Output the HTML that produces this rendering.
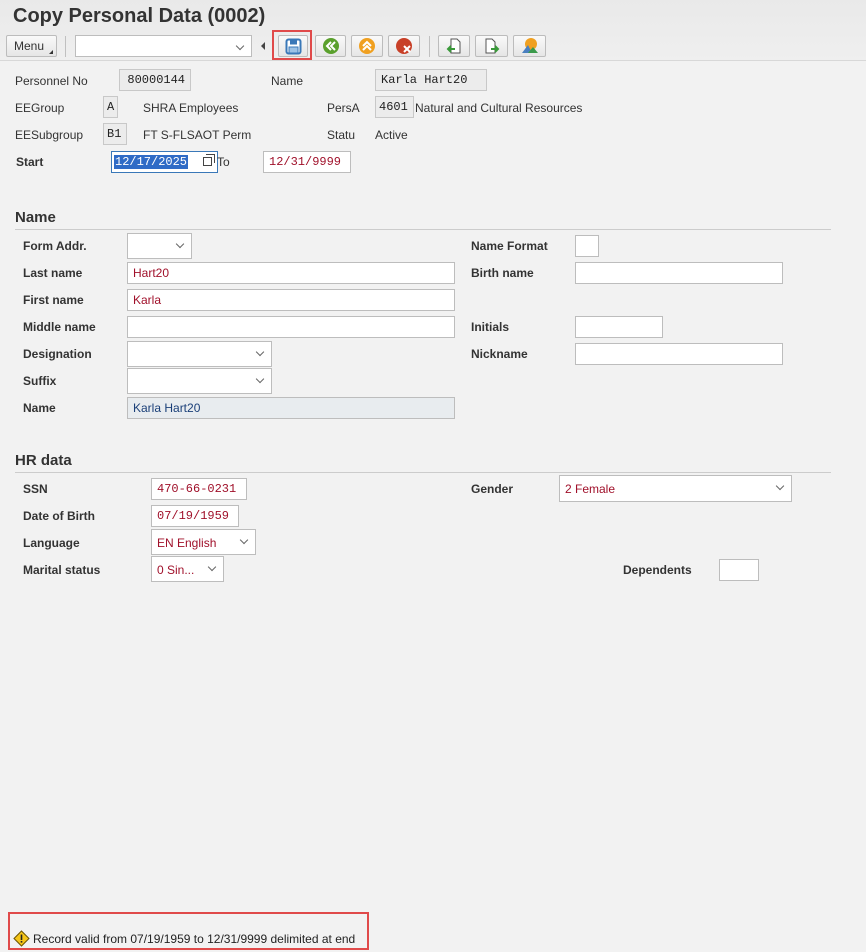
<!DOCTYPE html>
<html><head><meta charset="utf-8"><style>
*{box-sizing:border-box;margin:0;padding:0}
body{width:866px;height:952px;background:#f2f2f2;font-family:"Liberation Sans",Arial,sans-serif;font-size:12px;color:#333;position:relative;overflow:hidden}
.a{position:absolute}
.hdr{left:0;top:0;width:866px;height:61px;background:linear-gradient(#e9e9e9,#efefef);border-bottom:1px solid #d8d8d8}
.t{left:13px;top:5px;font-size:20px;font-weight:bold;color:#333}
.btn{top:35px;height:22px;border:1px solid #bcbcbc;background:linear-gradient(#fafafa,#e6e6e6);border-radius:2px}
.l{font-size:12px;color:#333}
.b{font-weight:bold}
.f{background:#fff;border:1px solid #bdbdbd;height:22px;padding:3px 5px;color:#a0102a;font-size:12px}
.ro{background:#ececec;border:1px solid #c8c8c8;height:22px;padding:3px 5px;font-family:"Liberation Mono",monospace;font-size:12px;color:#222}
.m{font-family:"Liberation Mono",monospace}
.dd::after{content:"";position:absolute;right:8px;top:7px;width:5px;height:5px;border-right:1.5px solid #666;border-bottom:1.5px solid #666;transform:rotate(45deg)}
.sec{font-size:15px;font-weight:bold;color:#333}
.line{height:1px;background:#ccc}
.ic{position:absolute;left:50%;top:50%;margin:-9px 0 0 -9px}
</style></head><body>
<div class="a hdr"></div>
<div class="a t">Copy Personal Data (0002)</div>
<div class="a btn" style="left:6px;width:51px;font-size:12px;padding:3px 0 0 7px">Menu<span style="position:absolute;right:3px;bottom:2px;width:0;height:0;border-left:4px solid transparent;border-bottom:4px solid #333"></span></div>
<div class="a" style="left:65px;top:36px;width:1px;height:21px;background:#c0c0c0"></div>
<div class="a f dd" style="left:75px;top:35px;width:177px;height:22px"></div>
<div class="a" style="left:261px;top:42px;width:0;height:0;border-top:4px solid transparent;border-bottom:4px solid transparent;border-right:4px solid #444"></div>
<div class="a btn" style="left:278px;width:30px"><svg class="a" style="left:6px;top:2px" width="17" height="17" viewBox="0 0 17 17"><rect x="1.5" y="1.5" width="14" height="14" rx="2" fill="#fff" stroke="#3a78b8" stroke-width="2"/><rect x="5" y="1.5" width="7" height="5" fill="#3a78b8"/><rect x="4" y="9" width="9" height="6" fill="#9cc2e6" stroke="#3a78b8"/></svg></div>
<div class="a" style="left:272px;top:30px;width:40px;height:30px;border:2px solid #e04a4a"></div>
<div class="a btn" style="left:315px;width:31px"><svg class="ic" width="18" height="18" viewBox="0 0 18 18"><circle cx="9" cy="9" r="8" fill="#5aa02c"/><path d="M9 5 L5 9 L9 13 M13 5 L9 9 L13 13" stroke="#fff" stroke-width="2" fill="none"/></svg></div>
<div class="a btn" style="left:351px;width:32px"><svg class="ic" width="18" height="18" viewBox="0 0 18 18"><circle cx="9" cy="9" r="8" fill="#f0a020"/><path d="M5 9 L9 5 L13 9 M5 13 L9 9 L13 13" stroke="#fff" stroke-width="2" fill="none"/></svg></div>
<div class="a btn" style="left:388px;width:32px"><svg class="ic" width="18" height="18" viewBox="0 0 18 18"><circle cx="9" cy="9" r="8" fill="#c84028"/><path d="M9 9 L15 15 M15 9 L9 15" stroke="#fff" stroke-width="2"/></svg></div>
<div class="a" style="left:429px;top:36px;width:1px;height:21px;background:#c0c0c0"></div>
<div class="a btn" style="left:438px;width:32px"><svg class="ic" width="18" height="18" viewBox="0 0 18 18"><path d="M6 2 H12 L15 5 V16 H6 Z" fill="#fff" stroke="#555"/><path d="M10 12 H3 M6 9 L3 12 L6 15" stroke="#3a9a3a" stroke-width="2" fill="none"/></svg></div>
<div class="a btn" style="left:475px;width:33px"><svg class="ic" width="18" height="18" viewBox="0 0 18 18"><path d="M3 2 H9 L12 5 V16 H3 Z" fill="#fff" stroke="#555"/><path d="M8 12 H15 M12 9 L15 12 L12 15" stroke="#3a9a3a" stroke-width="2" fill="none"/></svg></div>
<div class="a btn" style="left:513px;width:33px"><svg class="ic" width="18" height="18" viewBox="0 0 18 18"><circle cx="10" cy="7" r="6" fill="#f0a020"/><path d="M1 16 L7 8 L11 16 Z" fill="#4a80c0"/><path d="M7 16 L12 10 L17 16 Z" fill="#3a9a4a"/></svg></div>

<div class="a l" style="left:15px;top:74px">Personnel No</div>
<div class="a ro" style="left:119px;top:69px;width:72px;text-align:right">80000144</div>
<div class="a l" style="left:271px;top:74px">Name</div>
<div class="a ro" style="left:375px;top:69px;width:112px">Karla Hart20</div>
<div class="a l" style="left:15px;top:101px">EEGroup</div>
<div class="a ro" style="left:103px;top:96px;width:15px;padding:3px 3px">A</div>
<div class="a l" style="left:143px;top:101px">SHRA Employees</div>
<div class="a l" style="left:327px;top:101px">PersA</div>
<div class="a ro" style="left:375px;top:96px;width:39px;padding:3px 3px">4601</div>
<div class="a l" style="left:415px;top:101px">Natural and Cultural Resources</div>
<div class="a l" style="left:15px;top:128px">EESubgroup</div>
<div class="a ro" style="left:103px;top:123px;width:24px;padding:3px 3px">B1</div>
<div class="a l" style="left:143px;top:128px">FT S-FLSAOT Perm</div>
<div class="a l" style="left:327px;top:128px">Statu</div>
<div class="a l" style="left:375px;top:128px">Active</div>
<div class="a l b" style="left:16px;top:155px">Start</div>
<div class="a" style="left:111px;top:151px;width:107px;height:22px;background:#fff;border:1px solid #3a78b8"><span class="a m" style="left:2px;top:3px;background:#2f6bc6;color:#fff;font-size:12px;padding:0 1px">12/17/2025</span><span class="a" style="left:91px;top:5px;width:9px;height:9px;border:1px solid #444"></span><span class="a" style="left:94px;top:2px;width:9px;height:9px;border-top:1px solid #444;border-right:1px solid #444"></span></div>
<div class="a l" style="left:217px;top:155px">To</div>
<div class="a f m" style="left:263px;top:151px;width:88px">12/31/9999</div>

<div class="a sec" style="left:15px;top:209px">Name</div>
<div class="a line" style="left:15px;top:229px;width:816px"></div>
<div class="a l b" style="left:23px;top:239px">Form Addr.</div>
<div class="a f dd" style="left:127px;top:233px;width:65px;height:26px"></div>
<div class="a l b" style="left:23px;top:266px">Last name</div>
<div class="a f" style="left:127px;top:262px;width:328px">Hart20</div>
<div class="a l b" style="left:23px;top:293px">First name</div>
<div class="a f" style="left:127px;top:289px;width:328px">Karla</div>
<div class="a l b" style="left:23px;top:320px">Middle name</div>
<div class="a f" style="left:127px;top:316px;width:328px"></div>
<div class="a l b" style="left:23px;top:347px">Designation</div>
<div class="a f dd" style="left:127px;top:341px;width:145px;height:26px"></div>
<div class="a l b" style="left:23px;top:374px">Suffix</div>
<div class="a f dd" style="left:127px;top:368px;width:145px;height:26px"></div>
<div class="a l b" style="left:23px;top:401px">Name</div>
<div class="a f" style="left:127px;top:397px;width:328px;background:#e8ecef;color:#1a3f78">Karla Hart20</div>
<div class="a l b" style="left:471px;top:239px">Name Format</div>
<div class="a f" style="left:575px;top:235px;width:24px"></div>
<div class="a l b" style="left:471px;top:266px">Birth name</div>
<div class="a f" style="left:575px;top:262px;width:208px"></div>
<div class="a l b" style="left:471px;top:320px">Initials</div>
<div class="a f" style="left:575px;top:316px;width:88px"></div>
<div class="a l b" style="left:471px;top:347px">Nickname</div>
<div class="a f" style="left:575px;top:343px;width:208px"></div>

<div class="a sec" style="left:15px;top:452px">HR data</div>
<div class="a line" style="left:15px;top:472px;width:816px"></div>
<div class="a l b" style="left:23px;top:482px">SSN</div>
<div class="a f m" style="left:151px;top:478px;width:96px">470-66-0231</div>
<div class="a l b" style="left:23px;top:509px">Date of Birth</div>
<div class="a f m" style="left:151px;top:505px;width:88px">07/19/1959</div>
<div class="a l b" style="left:23px;top:536px">Language</div>
<div class="a f dd" style="left:151px;top:529px;width:105px;height:26px;padding-top:6px">EN English</div>
<div class="a l b" style="left:23px;top:563px">Marital status</div>
<div class="a f dd" style="left:151px;top:556px;width:73px;height:26px;padding-top:6px">0 Sin...</div>
<div class="a l b" style="left:471px;top:482px">Gender</div>
<div class="a f dd" style="left:559px;top:475px;width:233px;height:27px;padding-top:6px">2 Female</div>
<div class="a l b" style="left:623px;top:563px">Dependents</div>
<div class="a f" style="left:719px;top:559px;width:40px"></div>

<div class="a" style="left:8px;top:912px;width:361px;height:38px;border:2px solid #e04a4a"></div>
<svg class="a" style="left:13px;top:930px" width="17" height="17" viewBox="0 0 17 17"><path d="M8.5 1 L16 8.5 L8.5 16 L1 8.5 Z" fill="#f5c518" stroke="#6a5200" stroke-width="1"/><rect x="7.7" y="4.5" width="1.6" height="5.5" fill="#222"/><rect x="7.7" y="11" width="1.6" height="1.6" fill="#222"/></svg>
<div class="a l" style="left:33px;top:932px;color:#222">Record valid from 07/19/1959 to 12/31/9999 delimited at end</div>
</body></html>
